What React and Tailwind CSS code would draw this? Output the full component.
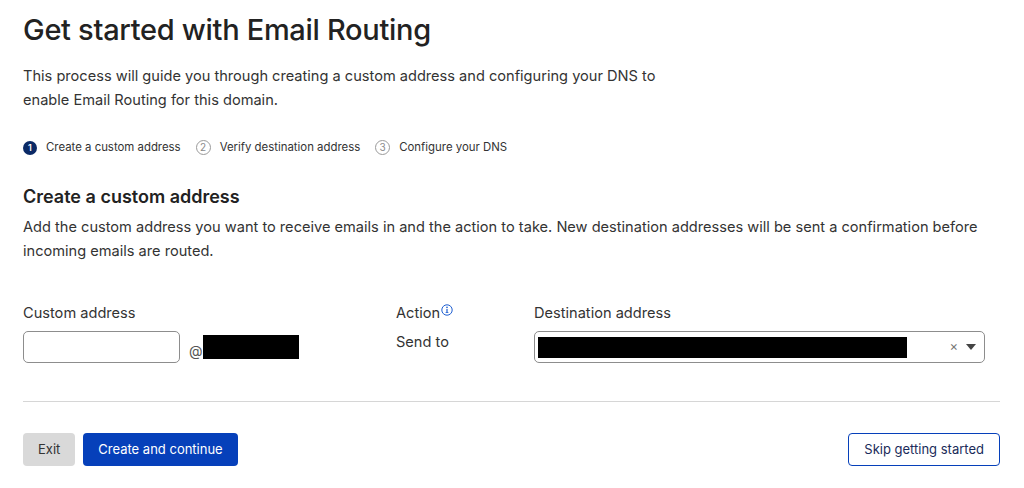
import React from 'react';

const font = { fontFamily: 'Inter, "Noto Sans", sans-serif' };

const StepIcon = ({ n, active }) =>
  active ? (
    <span className="inline-flex h-[14px] w-[14px] items-center justify-center rounded-full bg-[#0b2a66] text-[9px] font-semibold text-white">
      {n}
    </span>
  ) : (
    <span className="inline-flex h-[15px] w-[15px] items-center justify-center rounded-full border border-[#9a9a9a] text-[10px] text-[#8a8a8a]">
      {n}
    </span>
  );

const InfoIcon = () => (
  <svg width="12" height="12" viewBox="0 0 12 12" className="ml-[1px] mt-[3px]">
    <circle cx="6" cy="6" r="5.2" fill="none" stroke="#1f5fd1" strokeWidth="1" />
    <rect x="5.4" y="5" width="1.2" height="3.6" fill="#1f5fd1" />
    <rect x="4.6" y="8.2" width="2.8" height="0.8" fill="#1f5fd1" />
    <circle cx="6" cy="3.4" r="0.8" fill="#1f5fd1" />
  </svg>
);

export default function App() {
  return (
    <div className="min-h-[488px] w-[1024px] bg-white pl-[23px] pr-[24px] text-[#313131]" style={font}>
      <h1 className="pt-[12px] text-[29px] font-medium leading-[36px] tracking-[-0.3px] text-[#222]">
        Get started with Email Routing
      </h1>

      <p className="mt-[16px] w-[640px] text-[14.6px] leading-[24px] text-[#333]">
        This process will guide you through creating a custom address and configuring your DNS to enable Email Routing for this domain.
      </p>

      {/* Steps */}
      <div className="mt-[27px] flex items-center text-[11.4px] text-[#333]">
        <div className="flex items-center gap-[9px]">
          <StepIcon n="1" active />
          <span>Create a custom address</span>
        </div>
        <div className="ml-[15px] flex items-center gap-[9px]">
          <StepIcon n="2" />
          <span>Verify destination address</span>
        </div>
        <div className="ml-[15px] flex items-center gap-[9px]">
          <StepIcon n="3" />
          <span>Configure your DNS</span>
        </div>
      </div>

      <h2 className="mt-[29px] text-[18px] font-semibold leading-[24px] text-[#222]">
        Create a custom address
      </h2>
      <p className="mt-[6px] text-[14.6px] leading-[24px] text-[#333]">
        Add the custom address you want to receive emails in and the action to take. New destination addresses will be sent a confirmation before incoming emails are routed.
      </p>

      {/* Form row */}
      <div className="mt-[38px] flex text-[14.6px] text-[#333]">
        <div className="w-[373px]">
          <div className="leading-[24px]">Custom address</div>
          <div className="mt-[6px] flex items-center">
            <input className="h-[32px] w-[157px] rounded-[5px] border border-[#8d8d8d] outline-none" />
            <span className="ml-[9px] mt-[6px] text-[14px] text-[#555]">@</span>
            <span className="h-[24px] w-[96px] bg-black" />
          </div>
        </div>
        <div className="w-[138px]">
          <div className="flex items-start leading-[24px]">
            Action
            <InfoIcon />
          </div>
          <div className="mt-[5px] leading-[24px]">Send to</div>
        </div>
        <div className="w-[451px]">
          <div className="leading-[24px]">Destination address</div>
          <div className="mt-[6px] flex h-[32px] items-center rounded-[5px] border border-[#8d8d8d] pl-[3px] pr-[8px]">
            <span className="h-[21px] w-[369px] bg-black" />
            <span className="ml-auto text-[13px] text-[#777]">×</span>
            <svg width="10" height="6" viewBox="0 0 10 6" className="ml-[8px]">
              <path d="M0 0 L10 0 L5 6 Z" fill="#444" />
            </svg>
          </div>
        </div>
      </div>

      <hr className="mt-[38px] border-t border-[#d6d6d6]" />

      {/* Buttons */}
      <div className="mt-[31px] flex items-center">
        <button className="h-[33px] rounded-[4px] bg-[#d9d9d9] px-[15px] text-[13px] text-[#333]">Exit</button>
        <button className="ml-[8px] h-[33px] rounded-[4px] bg-[#0640ba] px-[15px] text-[13px] text-white">
          Create and continue
        </button>
        <button className="ml-auto h-[33px] rounded-[4px] border border-[#0640ba] bg-white px-[15px] text-[13px] text-[#1a2b5a]">
          Skip getting started
        </button>
      </div>
    </div>
  );
}
